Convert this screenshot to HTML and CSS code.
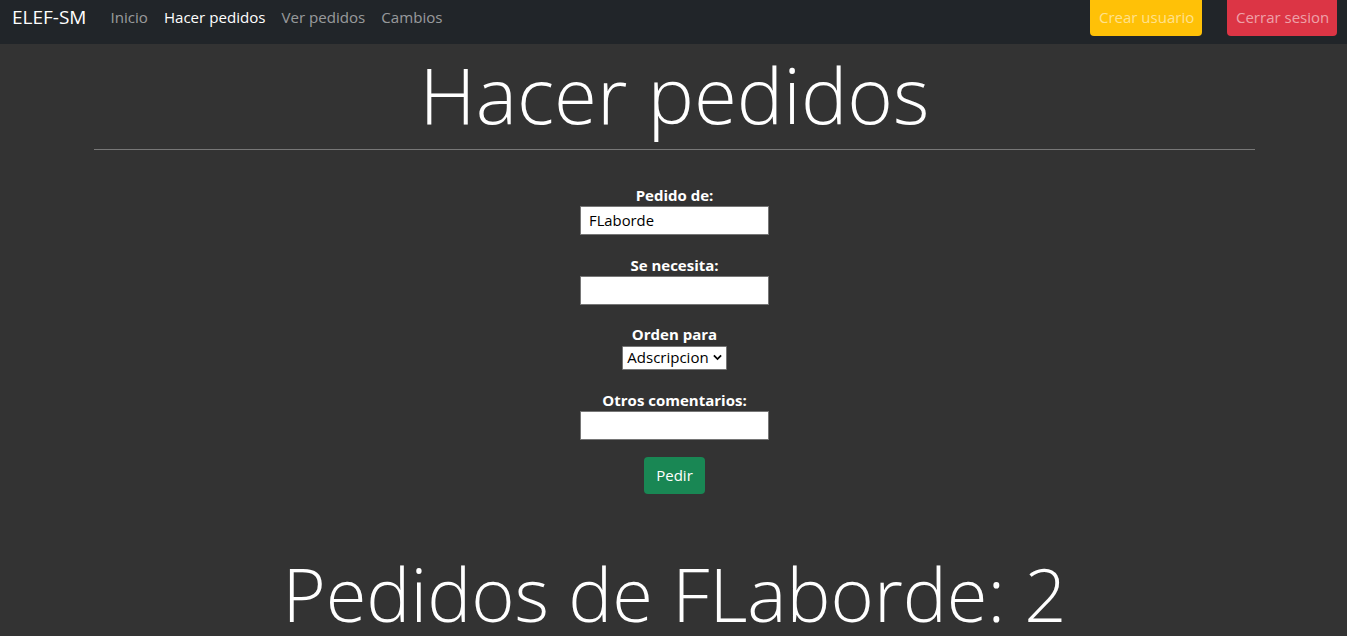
FILE: index.html
```html
<!DOCTYPE html>
<html lang="es">
<head>
<meta charset="utf-8">
<title>Hacer pedidos</title>
<link rel="stylesheet" href="styles.css">
</head>
<body>
<nav class="navbar">
  <a class="brand" href="#">ELEF-SM</a>
  <ul class="nav-links">
    <li><a class="nav-link" href="#">Inicio</a></li>
    <li><a class="nav-link active" href="#">Hacer pedidos</a></li>
    <li><a class="nav-link" href="#">Ver pedidos</a></li>
    <li><a class="nav-link" href="#">Cambios</a></li>
  </ul>
  <div class="nav-actions">
    <a class="btn btn-warning" href="#">Crear usuario</a>
    <a class="btn btn-danger" href="#">Cerrar sesion</a>
  </div>
</nav>
<main class="main">
  <h1 class="display">Hacer pedidos</h1>
  <hr class="divider">
  <form class="order-form">
    <div class="field f1">
      <label for="de">Pedido de:</label>
      <input id="de" type="text" value="FLaborde">
    </div>
    <div class="field f2">
      <label for="nec">Se necesita:</label>
      <input id="nec" type="text">
    </div>
    <div class="field field-select">
      <label for="para">Orden para</label>
      <div class="select">Adscripcion<svg class="chev" viewBox="0 0 10 7" width="9" height="7"><path d="M1 1.2 L5 5.2 L9 1.2" fill="none" stroke="#000" stroke-width="2"/></svg></div>
    </div>
    <div class="field">
      <label for="com">Otros comentarios:</label>
      <input id="com" type="text">
    </div>
    <button class="btn-submit" type="button">Pedir</button>
  </form>
  <h1 class="display second">Pedidos de FLaborde: 2</h1>
</main>
</body>
</html>
```
FILE: styles.css
```css
* { box-sizing: border-box; }
html, body { margin: 0; padding: 0; }
body {
  background: #333333;
  color: #fff;
  font-family: "Open Sans", "Noto Sans", sans-serif;
  font-size: 16px;
  line-height: 1.5;
  height: 636px;
  overflow: hidden;
}
a { text-decoration: none; }
.navbar {
  background: #212529;
  height: 44px;
  display: flex;
  align-items: flex-start;
  padding: 0 10px 0 12px;
}
.brand {
  color: #fff;
  font-size: 19px;
  line-height: 34px;
  margin-right: 16px;
  white-space: nowrap;
}
.nav-links {
  list-style: none;
  display: flex;
  margin: 0;
  padding: 0;
  flex: 1;
}
.nav-link {
  display: block;
  color: rgba(255,255,255,0.55);
  font-size: 15.1px;
  line-height: 34px;
  padding: 0 8px;
  white-space: nowrap;
}
.nav-link.active { color: #fff; }
.nav-actions { display: flex; gap: 25px; }
.btn {
  display: block;
  height: 36px;
  line-height: 34px;
  padding: 0 9px;
  font-size: 15px;
  color: rgba(255,255,255,0.55);
  border-radius: 0 0 4px 4px;
  white-space: nowrap;
  text-align: center;
}
.btn-warning { background: #ffc107; width: 112px; }
.btn-danger { background: #dc3545; width: 110px; }
.main {
  padding: 0 92px 0 94px;
  text-align: center;
}
.display {
  font-weight: 300;
  font-size: 78px;
  line-height: 1.2;
  margin: 0;
  padding-top: 4px;
}
.divider {
  margin: 7px 0 0;
  border: 0;
  border-top: 1px solid #777;
}
.order-form {
  display: flex;
  flex-direction: column;
  align-items: center;
  padding-top: 34px;
}
.field {
  display: flex;
  flex-direction: column;
  align-items: center;
  margin-bottom: 17px;
}
.field.f1 { margin-bottom: 19px; }
.field.f2 { margin-bottom: 18px; }
.field label {
  font-weight: 700;
  font-size: 15px;
  line-height: 22px;
}
.field input {
  width: 189px;
  height: 29px;
  border: 1px solid #767676;
  background: #fff;
  font-family: inherit;
  font-size: 14.8px;
  color: #000;
  padding: 0 8px;
  margin: 0;
}
.field-select { margin-bottom: 19px; }
.field-select label { margin-bottom: 1px; }
.select {
  display: flex;
  align-items: center;
  gap: 4px;
  height: 24px;
  background: #fff;
  border: 1px solid #767676;
  color: #000;
  font-size: 15px;
  padding: 0 4px 0 4px;
  border-radius: 1px;
}
.btn-submit {
  background: #198754;
  color: #fff;
  border: 0;
  border-radius: 4px;
  width: 61px;
  height: 37px;
  font-family: inherit;
  font-size: 15px;
  margin-top: 0;
}
.second { padding-top: 56px; font-size: 74px; }
```
